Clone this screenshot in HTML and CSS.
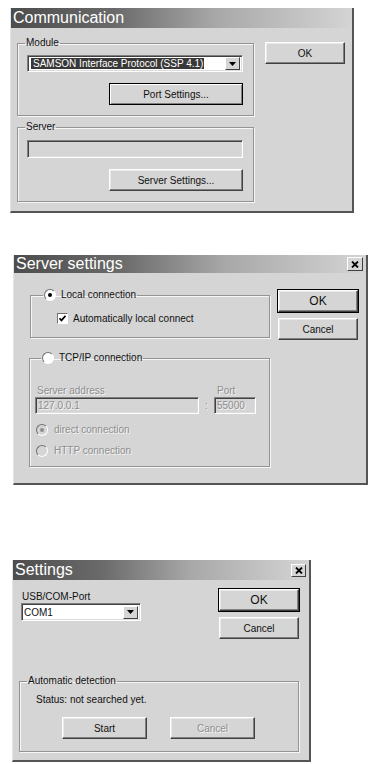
FILE: index.html
```html
<!DOCTYPE html>
<html lang="en">
<head>
<meta charset="UTF-8">
<title>Communication dialogs</title>
<link rel="stylesheet" href="styles.css">
</head>
<body>

<div class="dlg dlg-comm">
	<div class="title">Communication</div>
	<div class="body">
		<div class="col">
			<fieldset class="grp grp-module">
				<legend>Module</legend>
				<div class="combo">
					<span class="combo-val"><span class="sel">SAMSON Interface Protocol (SSP 4.1)</span></span>
					<span class="combo-btn"><svg width="7" height="4" viewBox="0 0 7 4"><path d="M0 0h7L3.5 4z" fill="#000"/></svg></span>
				</div>
				<div class="btn-row"><button class="btn btn-wide btn-focus">Port Settings...</button></div>
			</fieldset>
			<fieldset class="grp grp-server">
				<legend>Server</legend>
				<div class="field field-off"></div>
				<div class="btn-row"><button class="btn btn-wide">Server Settings...</button></div>
			</fieldset>
		</div>
		<div class="side">
			<button class="btn">OK</button>
		</div>
	</div>
</div>

<div class="dlg dlg-server">
	<div class="title title-sm">
		<span>Server settings</span>
		<span class="close"><svg width="8" height="7" viewBox="0 0 8 7"><path d="M1 0.5l6 6M7 0.5l-6 6" stroke="#000" stroke-width="1.8"/></svg></span>
	</div>
	<div class="body">
		<div class="col">
			<fieldset class="grp grp-local">
				<legend><span class="radio on"></span>Local connection</legend>
				<div class="check-row"><span class="check"><svg width="7" height="7" viewBox="0 0 7 7"><path d="M0.5 3.2l2 2.2 4-4.6" stroke="#000" stroke-width="1.7" fill="none"/></svg></span>Automatically local connect</div>
			</fieldset>
			<fieldset class="grp grp-tcp">
				<legend><span class="radio"></span>TCP/IP connection</legend>
				<div class="addr">
					<span class="lbl off">Server address</span>
					<span></span>
					<span class="lbl lbl-port off">Port</span>
					<div class="field field-off off">127.0.0.1</div>
					<span class="colon off">:</span>
					<div class="field field-off off">55000</div>
				</div>
				<div class="radio-row off"><span class="radio on dis"></span>direct connection</div>
				<div class="radio-row radio-row-2 off"><span class="radio dis"></span>HTTP connection</div>
			</fieldset>
		</div>
		<div class="side">
			<button class="btn btn-default btn-big">OK</button>
			<button class="btn">Cancel</button>
		</div>
	</div>
</div>

<div class="dlg dlg-settings">
	<div class="title">
		<span>Settings</span>
		<span class="close"><svg width="8" height="7" viewBox="0 0 8 7"><path d="M1 0.5l6 6M7 0.5l-6 6" stroke="#000" stroke-width="1.8"/></svg></span>
	</div>
	<div class="body body-col">
		<div class="top">
			<div class="port">
				<div class="port-lbl">USB/COM-Port</div>
				<div class="combo combo-port">
					<span class="combo-val">COM1</span>
					<span class="combo-btn"><svg width="7" height="4" viewBox="0 0 7 4"><path d="M0 0h7L3.5 4z" fill="#000"/></svg></span>
				</div>
			</div>
			<div class="side">
				<button class="btn btn-default btn-big">OK</button>
				<button class="btn">Cancel</button>
			</div>
		</div>
		<fieldset class="grp grp-detect">
			<legend>Automatic detection</legend>
			<div class="status">Status: not searched yet.</div>
			<div class="detect-btns">
				<button class="btn btn-mid">Start</button>
				<button class="btn btn-mid off">Cancel</button>
			</div>
		</fieldset>
	</div>
</div>

</body>
</html>
```

FILE: styles.css
```css
html {

	font-family: "Liberation Sans", Arial, sans-serif;
	font-size: 10px;
	color: #111;
}
body {

	margin: 0;
	background: #fff;
}

/* dialog frames */
.dlg {

	box-sizing: border-box;
	background: #d5d5d5;
	border-left: 1px solid #e4e4e4;
	border-right: 2px solid #555;
	border-bottom: 2px solid #555;
	display: flex;
	flex-direction: column;
}
.dlg-comm {

	width: 344px;
	height: 205px;
	margin: 8px 0 0 10px;
}
.dlg-server {

	width: 355px;
	height: 230px;
	margin: 42px 0 0 13px;
}
.dlg-settings {

	width: 299px;
	height: 202px;
	margin: 75px 0 0 12px;
}
.title {

	height: 20px;
	display: flex;
	align-items: center;
	padding: 0 3px 0 2px;
	background: linear-gradient(to right, #4d4d4d 0%, #6a6a6a 30%, #a8a8a8 60%, #d4d4d4 100%);
	color: #fff;
	font-size: 16px;
	flex: none;
}
.title-sm {

	height: 18px;
}
.close {

	margin-left: auto;
	box-sizing: border-box;
	width: 16px;
	height: 14px;
	display: flex;
	align-items: center;
	justify-content: center;
	background: #d5d5d5;
	border: 1px solid;
	border-color: #fff #404040 #404040 #fff;
}
.dlg-settings .close {

	width: 15px;
	height: 13px;
}
.body {

	display: flex;
	flex: 1;
}
.body-col {

	flex-direction: column;
}
.side {

	display: flex;
	flex-direction: column;
	gap: 6px;
}

/* group boxes */
.grp {

	margin: 0;
	min-width: 0;
	box-sizing: border-box;
	border: 1px solid #939393;
	box-shadow: inset 1px 1px 0 #f6f6f6, 1px 1px 0 #f6f6f6;
	padding: 0 10px 10px 9px;
}
.grp legend {

	padding: 0 1px;
	margin-left: -2px;
	line-height: 12px;
	display: flex;
	align-items: center;
}

/* buttons */
.btn {

	font: inherit;
	color: #111;
	box-sizing: border-box;
	width: 80px;
	height: 22px;
	padding: 0;
	background: #d5d5d5;
	border: 1px solid;
	border-color: #fff #404040 #404040 #fff;
	box-shadow: inset -1px -1px 0 #808080, inset 1px 1px 0 #e9e9e9;
}
.btn-default {

	outline: 1px solid #000;
}
.btn-focus {

	border-color: #000;
	box-shadow: inset 1px 1px 0 #fff, inset -1px -1px 0 #808080;
}
.btn-big {

	font-size: 12px;
	margin-top: 1px;
}
.btn-wide {

	width: 134px;
}
.btn-mid {

	width: 85px;
}
.btn-row {

	display: flex;
	justify-content: flex-end;
	margin-top: 11px;
}
.off {

	color: #8e8e8e;
	text-shadow: 1px 1px 0 #f4f4f4;
}

/* edit fields and combo boxes */
.field, .combo {

	box-sizing: border-box;
	height: 17px;
	border: 1px solid;
	border-color: #808080 #fff #fff #808080;
	box-shadow: inset 1px 1px 0 #404040, inset -1px -1px 0 #dcdcdc;
	background: #fff;
	display: flex;
	align-items: center;
}
.field {

	padding-left: 2px;
}
.field-off {

	background: #d5d5d5;
}
.combo-val {

	flex: 1;
	padding-left: 3px;
	white-space: nowrap;
	overflow: hidden;
}
.combo .sel {

	background: #383838;
	color: #fff;
	padding: 1px 1px 1px 2px;
}
.combo-btn {

	box-sizing: border-box;
	width: 15px;
	height: 13px;
	margin-right: 2px;
	display: flex;
	align-items: center;
	justify-content: center;
	background: #d5d5d5;
	border: 1px solid;
	border-color: #fff #404040 #404040 #fff;
}

/* Communication */
.dlg-comm .body {

	padding: 9px 7px 0 6px;
	gap: 11px;
}
.dlg-comm .col {

	width: 237px;
}
.dlg-comm .side {

	padding-top: 5px;
}
.grp-module {

	padding-top: 6px;
}
.grp-server {

	margin-top: 5px;
	padding-top: 7px;
}
.grp-server .field {

	height: 18px;
}

/* Server settings */
.dlg-server .body {

	padding: 16px 8px 0 15px;
	gap: 8px;
}
.dlg-server .col {

	width: 241px;
}
.radio {

	box-sizing: border-box;
	width: 12px;
	height: 12px;
	border-radius: 50%;
	border: 1px solid;
	border-color: #707070 #fff #fff #707070;
	background: #fff;
	margin-right: 5px;
	display: inline-flex;
	align-items: center;
	justify-content: center;
	flex: none;
}
.radio.on::after {

	content: "";
	width: 4px;
	height: 4px;
	border-radius: 50%;
	background: #000;
}
.radio.dis {

	background: #d5d5d5;
}
.radio.dis::after {

	background: #8e8e8e;
}
.grp-local {

	margin-left: 1px;
	width: 240px;
	padding: 11px 10px 12px 12px;
}
.grp-local legend {

	margin-left: 0;
}
.check-row {

	display: flex;
	align-items: center;
	height: 13px;
	margin-left: 14px;
}
.check {

	box-sizing: border-box;
	width: 11px;
	height: 11px;
	margin-right: 5px;
	border: 1px solid;
	border-color: #707070 #fff #fff #707070;
	background: #fff;
	display: flex;
	align-items: center;
	justify-content: center;
}
.grp-tcp {

	margin-top: 14px;
	width: 241px;
	padding: 21px 6px 9px 5px;
}
.grp-tcp legend {

	margin-left: 6px;
}
.addr {

	display: grid;
	grid-template-columns: 164px 15px 42px;
	grid-template-rows: 12px 17px;
}
.lbl {

	line-height: 12px;
	padding-left: 2px;
}
.lbl-port {

	padding-left: 3px;
}
.colon {

	display: flex;
	align-items: center;
	justify-content: center;
}
.radio-row {

	display: flex;
	align-items: center;
	height: 13px;
	margin-top: 9px;
	padding-left: 1px;
}
.radio-row-2 {

	margin-top: 8px;
}
.radio-row .radio {

	margin-right: 6px;
}

/* Settings */
.dlg-settings .body {

	padding: 8px 10px 0 6px;
}
.top {

	display: flex;
	justify-content: space-between;
}
.port {

	padding: 3px 0 0 2px;
	width: 120px;
}
.port-lbl {

	line-height: 12px;
	padding-left: 1px;
}
.combo-port {

	height: 18px;
}
.combo-port .combo-val {

	padding-left: 2px;
}
.grp-detect {

	margin-top: 36px;
	width: 280px;
	padding: 7px 10px 12px 7px;
}
.grp-detect legend {

	margin-left: 0;
}
.status {

	line-height: 12px;
	margin-left: 9px;
}
.detect-btns {

	display: flex;
	gap: 23px;
	margin: 11px 0 0 35px;
}
```
